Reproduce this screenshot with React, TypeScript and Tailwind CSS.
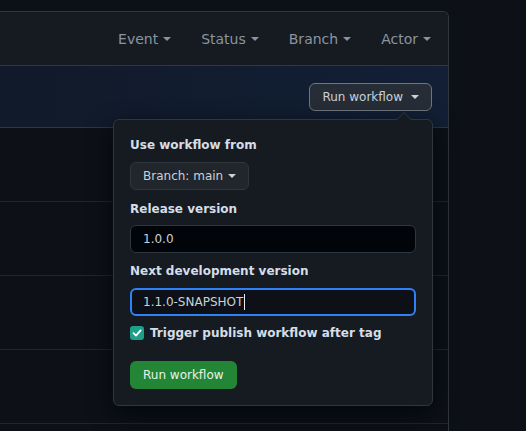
import { useState } from 'react';

const Caret = ({ className = '' }: { className?: string }) => (
  <span
    aria-hidden="true"
    className={`inline-block h-0 w-0 border-x-4 border-t-4 border-x-transparent align-middle ${className}`}
  />
);

const filters = ['Event', 'Status', 'Branch', 'Actor'];

const RunWorkflowMenu = () => {
  const [publish, setPublish] = useState(true);
  return (
    <div className="absolute left-[113px] top-[119px] w-[320px] rounded-md border border-[#30363d] bg-[#161b22] p-4 shadow-[0_8px_24px_rgba(1,4,9,0.8)]">
      {/* caret pointing at the button */}
      <span className="absolute -top-[8px] right-[20px] h-0 w-0 border-x-8 border-b-8 border-x-transparent border-b-[#30363d]" />
      <span className="absolute -top-[7px] right-[21px] h-0 w-0 border-x-[7px] border-b-[7px] border-x-transparent border-b-[#161b22]" />

      <p className="text-xs leading-[18px] font-bold text-[#d5dde6]">Use workflow from</p>
      <button className="mt-2 flex h-[28px] items-center rounded-md border border-[#30363d] bg-[#21262d] px-3 text-xs text-[#c9d1d9]">
        Branch: main
        <Caret className="ml-[5px] border-t-[#c9d1d9]" />
      </button>

      <p className="mt-[10px] text-xs leading-[18px] font-bold text-[#d5dde6]">Release version</p>
      <div className="mt-[7px] flex h-[28px] items-center rounded-md border border-[#30363d] bg-[#010409] px-3 text-xs text-[#c9d1d9]">
        1.0.0
      </div>

      <p className="mt-[9px] text-xs leading-[18px] font-bold text-[#d5dde6]">Next development version</p>
      <div className="mt-2 flex h-[28px] items-center rounded-md border-2 border-[#2f81f7] bg-[#0d1117] px-[11px] text-xs text-[#c9d1d9]">
        1.1.0-SNAPSHOT
        <span className="ml-px h-[16px] w-px bg-[#e6edf3]" />
      </div>

      <label className="mt-2 flex h-[18px] items-center gap-[6px] text-xs font-bold text-[#d5dde6]">
        <span
          onClick={() => setPublish(!publish)}
          className="flex h-[14px] w-[14px] items-center justify-center rounded-[3px] bg-[#1f9e89]"
        >
          {publish && (
            <svg width="10" height="10" viewBox="0 0 10 10" fill="none">
              <path d="M1.5 5.2L4 7.6L8.6 2.4" stroke="#fff" strokeWidth="1.8" strokeLinecap="round" strokeLinejoin="round" />
            </svg>
          )}
        </span>
        Trigger publish workflow after tag
      </label>

      <button className="mt-[19px] flex h-[28px] items-center rounded-md bg-[#238636] px-[13px] text-xs text-[#e6f3e9]">
        Run workflow
      </button>
    </div>
  );
};

export default function App() {
  return (
    <div className="relative h-[431px] w-[526px] overflow-hidden bg-[#0d1117] pt-[11px] font-['DejaVu_Sans',sans-serif]">
      <div className="h-[420px] w-[449px] rounded-tr-md border-t border-r border-[#30363d]">
        <div className="flex h-[53px] items-center justify-end rounded-tr-md bg-[#161b22] pr-[2px]">
          {filters.map((f) => (
            <span key={f} className="flex items-center px-[15px] text-sm text-[#8b949e]">
              {f}
              <Caret className="ml-[5px] border-t-[#8b949e]" />
            </span>
          ))}
        </div>
        <div className="flex h-[63px] items-center justify-end border-y border-[#1c3a64] bg-gradient-to-r from-[#111a2a] to-[#121f35] pr-4">
          <button className="flex h-[28px] items-center rounded-md border border-[#6e7681] bg-[#272d36] px-3 text-xs text-[#c9d1d9]">
            Run workflow
            <Caret className="ml-2 border-t-[#c9d1d9]" />
          </button>
        </div>
        {[0, 1, 2, 3].map((i) => (
          <div key={i} className="h-[74px] border-b border-[#21262d] bg-[#0d1117]" />
        ))}
      </div>
      <RunWorkflowMenu />
    </div>
  );
}
